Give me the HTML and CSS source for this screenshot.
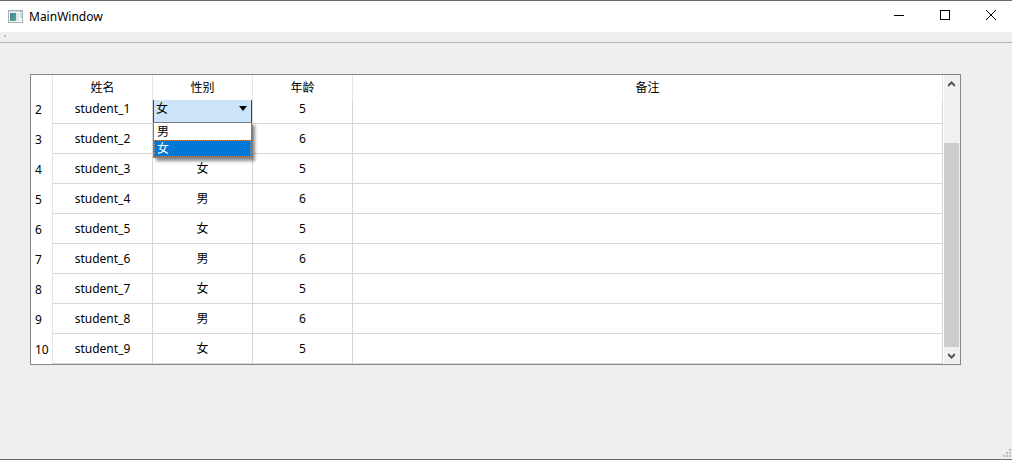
FILE: index.html
```html
<!DOCTYPE html>
<html lang="zh-CN">
<head>
    <meta charset="UTF-8">
    <meta name="viewport" content="width=device-width, initial-scale=1.0">
    <title>MainWindow</title>
    <link rel="stylesheet" href="styles.css">
</head>
<body>
    <div class="window">
        <header class="titlebar">
            <svg class="app-icon" width="15" height="13" viewBox="0 0 15 13" shape-rendering="crispEdges">
                <defs>
                    <linearGradient id="pane" x1="0" y1="0" x2="1" y2="1">
                        <stop offset="0" stop-color="#3f7fa6"/>
                        <stop offset="1" stop-color="#58ac82"/>
                    </linearGradient>
                </defs>
                <rect x="0.5" y="0.5" width="14" height="12" fill="#f4f6f7" stroke="#a9afb4"/>
                <rect x="1" y="1" width="13" height="1" fill="#d3d9de"/>
                <rect x="2" y="3" width="6" height="8" fill="url(#pane)"/>
                <rect x="8" y="3" width="3" height="8" fill="#e3e6e8"/>
                <rect x="12" y="3" width="2" height="5" fill="#c5dfe0"/>
                <rect x="12" y="1" width="1" height="1" fill="#7d94c4"/>
            </svg>
            <h1>MainWindow</h1>
            <div class="window-buttons">
                <button type="button" aria-label="Minimize">
                    <svg width="10" height="10" viewBox="0 0 10 10" shape-rendering="crispEdges"><path d="M0 5.5h10"/></svg>
                </button>
                <button type="button" aria-label="Maximize">
                    <svg width="10" height="10" viewBox="0 0 10 10" shape-rendering="crispEdges"><path d="M0.5 0.5h9v9h-9z"/></svg>
                </button>
                <button type="button" aria-label="Close">
                    <svg width="10" height="10" viewBox="0 0 10 10"><path d="M0 0l10 10M10 0L0 10"/></svg>
                </button>
            </div>
        </header>
        <div class="toolbar"><span class="handle"></span></div>

        <main class="content">
            <div class="table-view">
                <table>
                    <thead>
                        <tr>
                            <td class="number"></td>
                            <th class="field">姓名</th>
                            <th class="field">性别</th>
                            <th class="field">年龄</th>
                            <th>备注</th>
                        </tr>
                    </thead>
                    <tbody>
                        <tr class="partial">
                            <th class="number">2</th>
                            <td>student_1</td>
                            <td class="editing">
                                <div class="combo">
                                    <select aria-label="性别">
                                        <option>男</option>
                                        <option selected>女</option>
                                    </select>
                                    <svg class="arrow" width="8" height="5" viewBox="0 0 8 5"><path d="M0 0h8L4 5z"/></svg>
                                    <ul class="popup" role="listbox" aria-label="性别">
                                        <li role="option" aria-selected="false">男</li>
                                        <li role="option" aria-selected="true">女</li>
                                    </ul>
                                </div>
                            </td>
                            <td>5</td>
                            <td></td>
                        </tr>
                        <tr><th class="number">3</th><td>student_2</td><td>男</td><td>6</td><td></td></tr>
                        <tr><th class="number">4</th><td>student_3</td><td>女</td><td>5</td><td></td></tr>
                        <tr><th class="number">5</th><td>student_4</td><td>男</td><td>6</td><td></td></tr>
                        <tr><th class="number">6</th><td>student_5</td><td>女</td><td>5</td><td></td></tr>
                        <tr><th class="number">7</th><td>student_6</td><td>男</td><td>6</td><td></td></tr>
                        <tr><th class="number">8</th><td>student_7</td><td>女</td><td>5</td><td></td></tr>
                        <tr><th class="number">9</th><td>student_8</td><td>男</td><td>6</td><td></td></tr>
                        <tr><th class="number">10</th><td>student_9</td><td>女</td><td>5</td><td></td></tr>
                    </tbody>
                </table>
                <div class="scrollbar">
                    <button type="button" aria-label="Scroll up">
                        <svg width="7" height="6" viewBox="0 0 7 6"><path d="M0 5L3.5 1.5L7 5"/></svg>
                    </button>
                    <div class="track"><div class="thumb"></div></div>
                    <button type="button" aria-label="Scroll down">
                        <svg width="7" height="6" viewBox="0 0 7 6"><path d="M0 1L3.5 4.5L7 1"/></svg>
                    </button>
                </div>
            </div>
        </main>

        <footer class="statusbar">
            <svg width="8" height="8" viewBox="0 0 8 8" shape-rendering="crispEdges">
                <path d="M6 0h2v2h-2zM3 3h2v2h-2zM6 3h2v2h-2zM0 6h2v2h-2zM3 6h2v2h-2zM6 6h2v2h-2z"/>
            </svg>
        </footer>
    </div>
</body>
</html>
```

FILE: styles.css
```css
* { box-sizing: border-box; }
body { margin: 0; font-family: "Noto Sans", "Noto Sans CJK SC", sans-serif; font-size: 12px; line-height: 16px; color: #000; background: #efefef; }
button { display: flex; align-items: center; justify-content: center; padding: 0; border: none; background: transparent; }

.window { display: flex; flex-direction: column; min-height: 100vh; border-top: 1px solid #6b6b6b; border-bottom: 1px solid #6b6b6b; }

.titlebar { display: flex; align-items: center; height: 31px; padding-left: 8px; background: #fff; }
.titlebar h1 { margin: 0 0 0 6px; font-size: 12px; font-weight: normal; }
.app-icon { display: block; }
.window-buttons { display: flex; gap: 4px; height: 28px; margin-left: auto; align-self: flex-start; }
.window-buttons button { width: 42px; }
.window-buttons svg { fill: none; stroke: #000; stroke-width: 1; }

.toolbar { height: 11px; padding: 3px 4px; border-bottom: 1px solid #b4b4b4; }
.handle { display: block; width: 2px; height: 2px; background: #b8b8b8; }

.content { flex: 1; padding: 31px 51px 0 30px; }
.table-view { display: flex; border: 1px solid #828790; background: #fff; }

table { flex: 1; table-layout: fixed; border-collapse: separate; border-spacing: 0; }
th, td { height: 30px; padding: 0; border-right: 1px solid #d8d8d8; border-bottom: 1px solid #d8d8d8; font-weight: normal; text-align: center; vertical-align: middle; }
thead th, thead td { height: 25px; border-bottom: none; border-right-color: #e5e5e5; }
.field { width: 100px; }
.number { width: 22px; padding: 1px 0 0 4px; border-bottom: none; border-right-color: #e5e5e5; text-align: left; }

/* top row is scrolled partly under the header */
.partial th, .partial td { height: 24px; padding-bottom: 6px; }
.partial .editing { padding: 0; }

.combo { position: relative; height: 23px; text-align: left; }
.combo select { display: block; width: 100%; height: 23px; padding: 0 2px 6px; appearance: none; border: solid #005499; border-width: 0 1px; border-radius: 0; outline: none; background: #cce4f7; font: inherit; color: #000; }
.arrow { position: absolute; top: 6px; right: 5px; }
.popup { position: absolute; top: 22px; left: 0; right: 0; z-index: 1; margin: 0; padding: 0; border: 1px solid #767b84; background: #fff; box-shadow: 3px 3px 3px rgba(0, 0, 0, 0.45); list-style: none; }
.popup li { height: 17px; padding-left: 3px; line-height: 17px; }
.popup li[aria-selected="true"] { outline: 1px dotted #c98a5c; outline-offset: -1px; background: #0078d7; color: #fff; }

.scrollbar { display: flex; flex-direction: column; width: 17px; padding-right: 1px; background: #f0f0f0; border-left: 1px solid #fff; }
.scrollbar button { height: 17px; }
.scrollbar svg { fill: none; stroke: #555; stroke-width: 2; }
.track { display: flex; flex: 1; flex-direction: column; justify-content: flex-end; }
.thumb { height: 80%; background: #cdcdcd; }

.statusbar { display: flex; justify-content: flex-end; padding: 0 1px 2px; }
.statusbar svg { display: block; fill: #bfbfbf; }
```
